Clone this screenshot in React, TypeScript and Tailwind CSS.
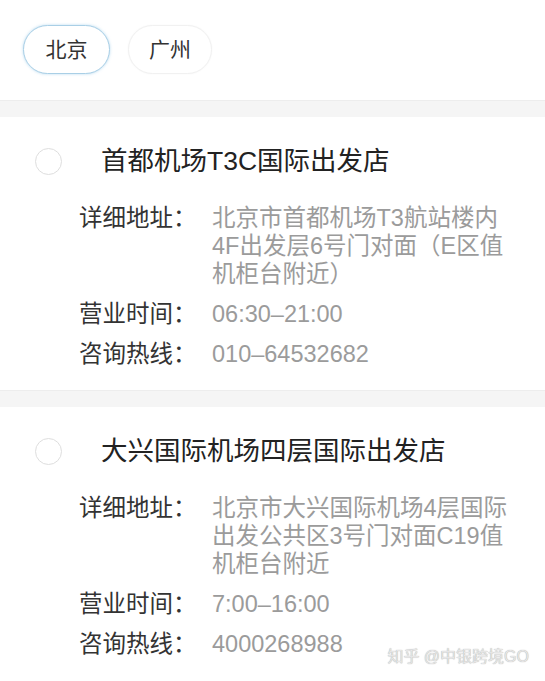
const CITIES = ['北京', '广州']

const STORES = [
  {
    name: '首都机场T3C国际出发店',
    address: ['北京市首都机场T3航站楼内', '4F出发层6号门对面（E区值', '机柜台附近）'],
    hours: '06:30–21:00',
    phone: '010–64532682',
  },
  {
    name: '大兴国际机场四层国际出发店',
    address: ['北京市大兴国际机场4层国际', '出发公共区3号门对面C19值', '机柜台附近'],
    hours: '7:00–16:00',
    phone: '4000268988',
  },
]

interface Store {
  name: string
  address: string[]
  hours: string
  phone: string
}

function Row({ label, lines }: { label: string; lines: string[] }) {
  return (
    <div className="flex flex-row text-[23.5px] leading-[28px]">
      <span className="w-[133px] shrink-0 text-[#333333]">{label}</span>
      <p className="whitespace-nowrap text-[#9b9b9b]">
        {lines.map((l, i) => (
          <span key={l}>
            {i > 0 && <br />}
            {l}
          </span>
        ))}
      </p>
    </div>
  )
}

function StoreCard({ name, address, hours, phone }: Store) {
  return (
    <section className="pb-[22px] pt-[26px]">
      <div className="flex h-[36px] items-center pl-[35px]">
        <span className="size-[27px] shrink-0 rounded-full border-[1.5px] border-[#dedede]" />
        <h3 className="ml-[39px] whitespace-nowrap text-[26.5px] font-normal leading-[36px] text-[#222222]">
          {name}
        </h3>
      </div>
      <div className="mt-[25px] flex flex-col gap-[12px] pl-[79px]">
        <Row label="详细地址：" lines={address} />
        <Row label="营业时间：" lines={[hours]} />
        <Row label="咨询热线：" lines={[phone]} />
      </div>
    </section>
  )
}

export default function App() {
  return (
    <div
      className="relative h-[681px] w-full overflow-hidden bg-white"
      style={{ fontFamily: '"Liberation Sans", "Noto Sans CJK SC", sans-serif' }}
    >
      <div className="flex gap-[18px] pb-[26px] pl-[23px] pt-[25px]">
        {CITIES.map((c, i) => (
          <button
            key={c}
            type="button"
            className={
              i === 0
                ? 'flex h-[49px] w-[87px] items-center justify-center rounded-full border border-[#a9cfe6] bg-white text-[21px] text-[#333333] shadow-[0_0_3px_rgba(140,195,230,0.6)]'
                : 'flex h-[49px] w-[84px] items-center justify-center rounded-full border border-[#f1f1f1] bg-white text-[21px] text-[#333333] shadow-[0_0_2px_rgba(0,0,0,0.04)]'
            }
          >
            {c}
          </button>
        ))}
      </div>

      <div className="h-[17px] border-t border-[#ededed] bg-[#f5f5f5]" />
      <StoreCard {...STORES[0]} />
      <div className="h-[17px] border-t border-[#ededed] bg-[#f5f5f5]" />
      <StoreCard {...STORES[1]} />

      <span className="absolute bottom-[12px] right-[16px] whitespace-nowrap text-[16px] text-[#e6e6e6] [text-shadow:0_0_1px_rgba(0,0,0,0.4)]">
        知乎 @中银跨境GO
      </span>
    </div>
  )
}
